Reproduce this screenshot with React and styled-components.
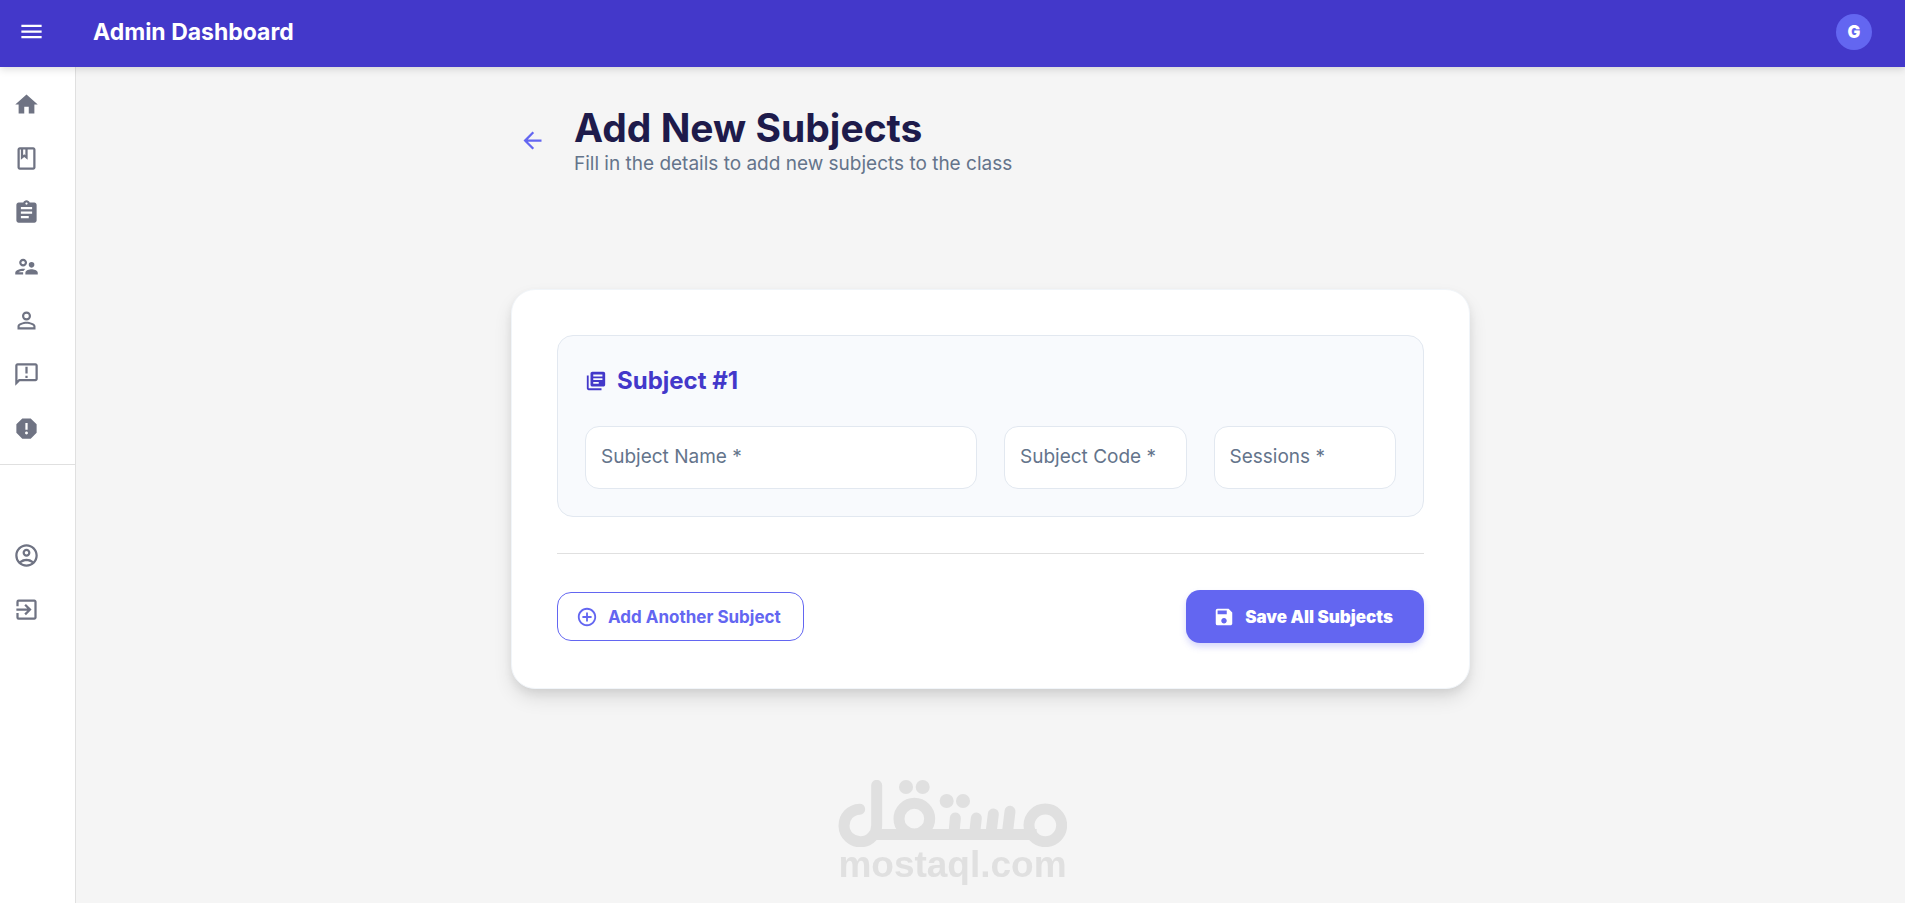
import React, { useState } from 'react';
import styled, { createGlobalStyle } from 'styled-components';
import {
  MdMenu,
  MdHome,
  MdOutlineClass,
  MdAssignment,
  MdOutlineSupervisorAccount,
  MdPersonOutline,
  MdOutlineAnnouncement,
  MdReport,
  MdOutlineAccountCircle,
  MdExitToApp,
  MdArrowBack,
  MdLibraryBooks,
  MdAddCircleOutline,
  MdSave,
} from 'react-icons/md';

const EMPTY_SUBJECT = { subName: '', subCode: '', sessions: '' };

const App = () => {
  const [subjects, setSubjects] = useState([EMPTY_SUBJECT]);

  const handleChange = (index, name) => (event) => {
    const { value } = event.target;
    setSubjects((prev) =>
      prev.map((item, i) => (i === index ? { ...item, [name]: value } : item))
    );
  };

  const addSubject = () => setSubjects((prev) => [...prev, EMPTY_SUBJECT]);

  return (
    <>
      <GlobalStyle />
      <Page>
        <TopBar>
          <MenuButton type="button" aria-label="Toggle menu">
            <MdMenu />
          </MenuButton>
          <BarTitle>Admin Dashboard</BarTitle>
          <Avatar type="button" aria-label="Account settings">
            G
          </Avatar>
        </TopBar>
        <Body>
          <SideBar>
            <NavList>
              {MAIN_LINKS.map(({ label, Icon }) => (
                <NavLink key={label} href="#" aria-label={label}>
                  <Icon />
                </NavLink>
              ))}
            </NavList>
            <NavDivider />
            <NavList $user>
              {USER_LINKS.map(({ label, Icon }) => (
                <NavLink key={label} href="#" aria-label={label}>
                  <Icon />
                </NavLink>
              ))}
            </NavList>
          </SideBar>
          <Main>
            <Container>
              <PageHeader>
                <BackButton type="button" aria-label="Go back">
                  <MdArrowBack />
                </BackButton>
                <div>
                  <Title>Add New Subjects</Title>
                  <Subtitle>
                    Fill in the details to add new subjects to the class
                  </Subtitle>
                </div>
              </PageHeader>
              <FormCard onSubmit={(event) => event.preventDefault()}>
                {subjects.map((subject, index) => (
                  <SubjectBox key={index}>
                    <SubjectTitle>
                      <MdLibraryBooks />
                      Subject #{index + 1}
                    </SubjectTitle>
                    <FieldGrid>
                      {FIELDS.map(({ name, label, type, span }) => (
                        <Field key={name} $span={span}>
                          <Input
                            id={`${name}-${index}`}
                            type={type}
                            placeholder=" "
                            required
                            value={subject[name]}
                            onChange={handleChange(index, name)}
                          />
                          <Label htmlFor={`${name}-${index}`}>{label} *</Label>
                        </Field>
                      ))}
                    </FieldGrid>
                  </SubjectBox>
                ))}
                <Divider />
                <Actions>
                  <AddButton type="button" onClick={addSubject}>
                    <MdAddCircleOutline />
                    Add Another Subject
                  </AddButton>
                  <SaveButton type="submit">
                    <MdSave />
                    Save All Subjects
                  </SaveButton>
                </Actions>
              </FormCard>
            </Container>
          </Main>
        </Body>
        <Watermark>
          <MostaqlMark />
          <span>mostaql.com</span>
        </Watermark>
      </Page>
    </>
  );
};

export default App;

const MostaqlMark = () => (
  <svg viewBox="54 60 687 202" fill="none" stroke="currentColor" strokeWidth="33" strokeLinecap="round" aria-hidden="true">
    <path d="M119 147.500A49 49 0 1 0 170 196V76" />
    <path d="M165 223.500H650" strokeLinecap="butt" />
    <circle cx="283" cy="176" r="46" />
    <circle cx="676" cy="196" r="49" />
    <path d="M406 174l-4 46M469 174l-5 46M520 162l-7 58M570 154l-8 66" />
    <g fill="currentColor" stroke="none">
      <circle cx="258" cy="81" r="21" />
      <circle cx="308" cy="81" r="21" />
      <circle cx="380" cy="123" r="21" />
      <circle cx="429" cy="123" r="21" />
    </g>
  </svg>
);

const GlobalStyle = createGlobalStyle`
  * {
    box-sizing: border-box;
  }

  body {
    margin: 0;
    background: #f5f5f5;
    font-family: Inter, 'Open Sans', sans-serif;
  }

  button,
  input {
    font-family: inherit;
  }
`;

const Page = styled.div`
  display: flex;
  flex-direction: column;
  min-height: 100vh;
`;

const TopBar = styled.header`
  position: relative;
  z-index: 1;
  display: flex;
  align-items: center;
  height: 67px;
  padding: 0 33px 4px 18px;
  color: #ffffff;
  background: #4338ca;
  box-shadow: 0 2px 8px rgba(0, 0, 0, 0.15);
`;

const IconButton = styled.button`
  display: flex;
  padding: 0;
  border: 0;
  background: none;
  color: inherit;
  font-size: 27px;
  cursor: pointer;
`;

const MenuButton = styled(IconButton)`
  margin-right: 48px;
`;

const BarTitle = styled.h1`
  flex: 1;
  margin: 0;
  font-size: 23px;
  line-height: 32px;
  font-weight: 700;
`;

const Avatar = styled.button`
  width: 36px;
  height: 36px;
  padding: 0;
  border: 0;
  border-radius: 50%;
  color: #ffffff;
  background: #6366f1;
  font-size: 17px;
  font-weight: 900;
  cursor: pointer;
`;

const Body = styled.div`
  display: flex;
  flex: 1;
`;

const SideBar = styled.nav`
  width: 76px;
  border-right: 1px solid #e0e0e0;
  background: #ffffff;
`;

const NavList = styled.div`
  display: flex;
  flex-direction: column;
  padding: ${({ $user }) => ($user ? '63px 0 0' : '10px 0 9px')};
`;

const NavLink = styled.a`
  display: flex;
  align-items: center;
  height: 54px;
  padding-left: 13px;
  color: #6f7383;
  font-size: 27px;
`;

const NavDivider = styled.hr`
  margin: 0;
  border: 0;
  border-top: 1px solid #e0e0e0;
`;

const Main = styled.main`
  flex: 1;
  padding: 37px 24px;
`;

const Container = styled.div`
  max-width: 959px;
  margin: 0 auto;
`;

const PageHeader = styled.div`
  display: flex;
  align-items: center;
  gap: 28px;
  padding-left: 8px;
  margin-bottom: 112px;
`;

const BackButton = styled(IconButton)`
  color: #6366f1;
`;

const Title = styled.h2`
  margin: 0;
  color: #1e1b4b;
  font-size: 39px;
  line-height: 47px;
  font-weight: 700;
`;

const Subtitle = styled.p`
  margin: 0;
  color: #64748b;
  font-size: 19px;
  line-height: 26px;
`;

const FormCard = styled.form`
  padding: 45px;
  border: 1px solid #f1f5f9;
  border-radius: 24px;
  background: #ffffff;
  box-shadow: 0 10px 20px -2px rgba(0, 0, 0, 0.12), 0 4px 8px rgba(0, 0, 0, 0.06);
`;

const SubjectBox = styled.section`
  padding: 27px;
  margin-bottom: 24px;
  border: 1px solid #e2e8f0;
  border-radius: 16px;
  background: #f8fafd;
`;

const SubjectTitle = styled.h3`
  display: flex;
  align-items: center;
  gap: 10px;
  margin: 0 0 28px;
  color: #4338ca;
  font-size: 24px;
  line-height: 35px;
  font-weight: 700;

  svg {
    font-size: 22px;
  }
`;

const FieldGrid = styled.div`
  display: grid;
  grid-template-columns: repeat(12, 1fr);
  gap: 27px;
`;

const Field = styled.div`
  position: relative;
  grid-column: span ${({ $span }) => $span};
`;

const Label = styled.label`
  position: absolute;
  top: 0;
  left: 16px;
  color: #64748b;
  font-size: 19px;
  line-height: 62px;
  pointer-events: none;
`;

const Input = styled.input`
  display: block;
  width: 100%;
  height: 63px;
  padding: 0 15px;
  border: 1px solid #e2e8f0;
  border-radius: 14px;
  background: #ffffff;
  color: #1e1b4b;
  font-size: 19px;

  &:focus {
    border-color: #6366f1;
    outline: none;
  }

  &:not(:placeholder-shown) + ${Label} {
    display: none;
  }
`;

const Divider = styled.hr`
  margin: 36px 0;
  border: 0;
  border-top: 1px solid #e0e0e0;
`;

const Actions = styled.div`
  display: flex;
  align-items: center;
  justify-content: space-between;
`;

const ActionButton = styled.button`
  display: flex;
  align-items: center;
  gap: 10px;
  border-radius: 14px;
  font-size: 17px;
  cursor: pointer;

  svg {
    font-size: 22px;
  }
`;

const AddButton = styled(ActionButton)`
  height: 49px;
  padding: 0 22px 0 18px;
  border: 1px solid #6366f1;
  background: #ffffff;
  color: #6366f1;
  font-weight: 700;
`;

const SaveButton = styled(ActionButton)`
  height: 53px;
  padding: 0 31px 0 27px;
  border: 0;
  background: #6366f1;
  color: #ffffff;
  font-weight: 900;
  box-shadow: 0 4px 6px rgba(99, 102, 241, 0.25);
`;

const Watermark = styled.div`
  position: fixed;
  right: 0;
  bottom: 21px;
  left: 0;
  display: flex;
  flex-direction: column;
  align-items: center;
  color: #e0e0e0;
  font-family: 'Liberation Sans', Arial, sans-serif;
  font-size: 37px;
  line-height: 35px;
  font-weight: 700;
  pointer-events: none;

  svg {
    width: 229px;
  }
`;

const MAIN_LINKS = [
  { label: 'Home', Icon: MdHome },
  { label: 'Classes', Icon: MdOutlineClass },
  { label: 'Subjects', Icon: MdAssignment },
  { label: 'Teachers', Icon: MdOutlineSupervisorAccount },
  { label: 'Students', Icon: MdPersonOutline },
  { label: 'Notices', Icon: MdOutlineAnnouncement },
  { label: 'Complains', Icon: MdReport },
];

const USER_LINKS = [
  { label: 'Profile', Icon: MdOutlineAccountCircle },
  { label: 'Logout', Icon: MdExitToApp },
];

const FIELDS = [
  { name: 'subName', label: 'Subject Name', type: 'text', span: 6 },
  { name: 'subCode', label: 'Subject Code', type: 'text', span: 3 },
  { name: 'sessions', label: 'Sessions', type: 'number', span: 3 },
];
